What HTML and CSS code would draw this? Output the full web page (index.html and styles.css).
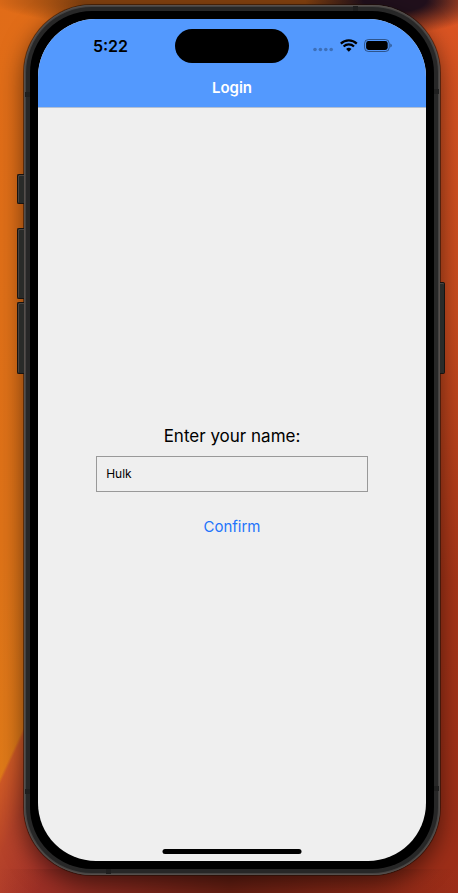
FILE: index.html
```html
<!DOCTYPE html>
<html lang="en">
<head>
<meta charset="utf-8">
<meta name="viewport" content="width=device-width, initial-scale=1">
<title>Login</title>
<link rel="stylesheet" href="styles.css">
</head>
<body>
<div class="phone">
  <span class="key key-action"></span>
  <span class="key key-up"></span>
  <span class="key key-down"></span>
  <span class="key key-power"></span>
  <span class="seam seam-top"></span>
  <span class="seam seam-bottom"></span>
  <span class="seam seam-left-top"></span>
  <span class="seam seam-left-bottom"></span>
  <span class="seam seam-right-top"></span>
  <span class="seam seam-right-bottom"></span>
  <div class="bezel">
    <div class="screen">
      <header class="header">
        <div class="status">
          <span class="time">5:22</span>
          <span class="island"></span>
          <span class="indicators">
            <svg width="21" height="14" viewBox="0 0 21 14" fill="#000" fill-opacity=".27" aria-hidden="true">
              <circle cx="2" cy="10.5" r="1.8"/><circle cx="7.4" cy="10.5" r="1.8"/><circle cx="12.8" cy="10.5" r="1.8"/><circle cx="18.2" cy="10.5" r="1.8"/>
            </svg>
            <svg width="18" height="14" viewBox="0 0 18 14" fill="none" stroke="#000" stroke-width="2.2" aria-hidden="true">
              <path d="M.8 4.6A11.6 11.6 0 0 1 16.8 4.6"/>
              <path d="M3.6 7.5A7.4 7.4 0 0 1 14 7.5"/>
              <path d="M8.8 12.8 6.1 10A3.9 3.9 0 0 1 11.5 10Z" fill="#000" stroke="none"/>
            </svg>
            <svg width="28" height="14" viewBox="0 0 28 14" aria-hidden="true">
              <rect x=".6" y=".5" width="24.6" height="12" rx="3.8" fill="none" stroke="#000" stroke-opacity=".45"/>
              <rect x="2.1" y="2" width="21.6" height="9" rx="2.4"/>
              <path d="M26.3 4.4q1.5.6 1.5 2.1t-1.5 2.1z" fill-opacity=".45"/>
            </svg>
          </span>
        </div>
        <h1 class="title">Login</h1>
      </header>
      <form class="form">
        <label class="label" for="name">Enter your name:</label>
        <input class="field" id="name" type="text" value="Hulk">
        <button class="confirm" type="button">Confirm</button>
      </form>
      <span class="home"></span>
    </div>
  </div>
</div>
</body>
</html>
```
FILE: styles.css
```css
* {
  box-sizing: border-box;
}

body {
  display: flex;
  min-height: 100vh;
  margin: 0;
  padding: 5px 18px 18px 24px;
  font-family: Inter, "Liberation Sans", sans-serif;
  color: #000;
  background:
    radial-gradient(ellipse 90px 34px at 395px 0, #21101c 0, #21101c 35%, transparent),
    radial-gradient(ellipse 230px 30px at 220px 0, #85420f 60%, transparent),
    linear-gradient(90deg, transparent, #6b2013 50%, transparent) 0 100% / 100% 24px no-repeat,
    linear-gradient(115deg, transparent 37px, #cf5926 40px, #b6432a 70px, #a53229 120px) 0 690px / 50% 300px no-repeat,
    linear-gradient(#dc5523, #c84b1e 35%, #a83518 65%, #9c2d18) 100% 0 / 50% 100% no-repeat,
    linear-gradient(#e16c18, #df7318 60%, #e17e19);
}

.phone {
  position: relative;
  display: flex;
  flex: 1;
  padding: 6px;
  border-radius: 68px;
  background: #272727;
  box-shadow:
    inset 0 0 0 1px #554e4b,
    inset 0 0 0 2px #444241,
    0 0 0 1px rgba(30, 12, 4, .55),
    0 8px 24px rgba(0, 0, 0, .55);
}

.bezel {
  display: flex;
  flex: 1;
  padding: 8px;
  border-radius: 62px;
  background: #000;
}

.screen {
  position: relative;
  display: flex;
  flex: 1;
  flex-direction: column;
  overflow: hidden;
  border-radius: 58px;
  background: #efefef;
}

.key {
  position: absolute;
  left: -7px;
  width: 7px;
  border: 1px solid #171311;
  border-right: 0;
  border-radius: 2px 0 0 2px;
  background: #292b29;
  box-shadow: inset 1px 1px #4a4440;
}

.key-action {
  top: 169px;
  height: 30px;
}

.key-up {
  top: 223px;
  height: 71px;
}

.key-down {
  top: 297px;
  height: 72px;
}

.key-power {
  top: 277px;
  right: -5px;
  left: auto;
  width: 5px;
  height: 92px;
  border-right: 1px solid #171311;
  border-left: 0;
  border-radius: 0 2px 2px 0;
  box-shadow: inset 0 1px #4a4440;
}

.seam {
  position: absolute;
  width: 5px;
  height: 5px;
  background: #1f1f1f;
}

.seam-top {
  top: 1px;
  right: 82px;
}

.seam-bottom {
  bottom: 1px;
  left: 82px;
}

.seam-left-top {
  top: 87px;
  left: 1px;
}

.seam-left-bottom {
  bottom: 81px;
  left: 1px;
}

.seam-right-top {
  top: 84px;
  right: 1px;
}

.seam-right-bottom {
  right: 1px;
  bottom: 84px;
}

.header {
  border-bottom: 1px solid #b3c0d3;
  background: #5399fe;
}

.status {
  display: grid;
  grid-template-columns: 1fr auto 1fr;
  align-items: center;
  justify-items: center;
  padding-top: 10px;
}

.time {
  padding-left: 8px;
  font-size: 16px;
  font-weight: 600;
  line-height: 20px;
}

.island {
  width: 114px;
  height: 34px;
  border-radius: 17px;
  background: #000;
}

.indicators {
  display: flex;
  gap: 6px;
  align-items: center;
  padding-right: 10px;
}

.title {
  margin: 0;
  padding: 15px 0 9px;
  font-size: 15px;
  font-weight: 600;
  line-height: 20px;
  text-align: center;
  color: #fff;
}

.form {
  display: flex;
  flex: 1;
  flex-direction: column;
  align-items: center;
  justify-content: center;
}

.label {
  font-size: 17px;
  line-height: 22px;
}

.field {
  width: 70%;
  height: 36px;
  margin: 9px 0 17px;
  padding: 0 9px;
  border: 1px solid #999;
  border-radius: 0;
  outline: 0;
  background: transparent;
  font: 12px Inter, "Liberation Sans", sans-serif;
  color: #000;
}

.confirm {
  height: 36px;
  padding: 0 8px;
  border: 0;
  background: transparent;
  font: 15px Inter, "Liberation Sans", sans-serif;
  color: #2374fb;
}

.home {
  position: absolute;
  bottom: 7px;
  left: 50%;
  width: 139px;
  height: 5px;
  border-radius: 3px;
  background: #000;
  transform: translateX(-50%);
}
```
